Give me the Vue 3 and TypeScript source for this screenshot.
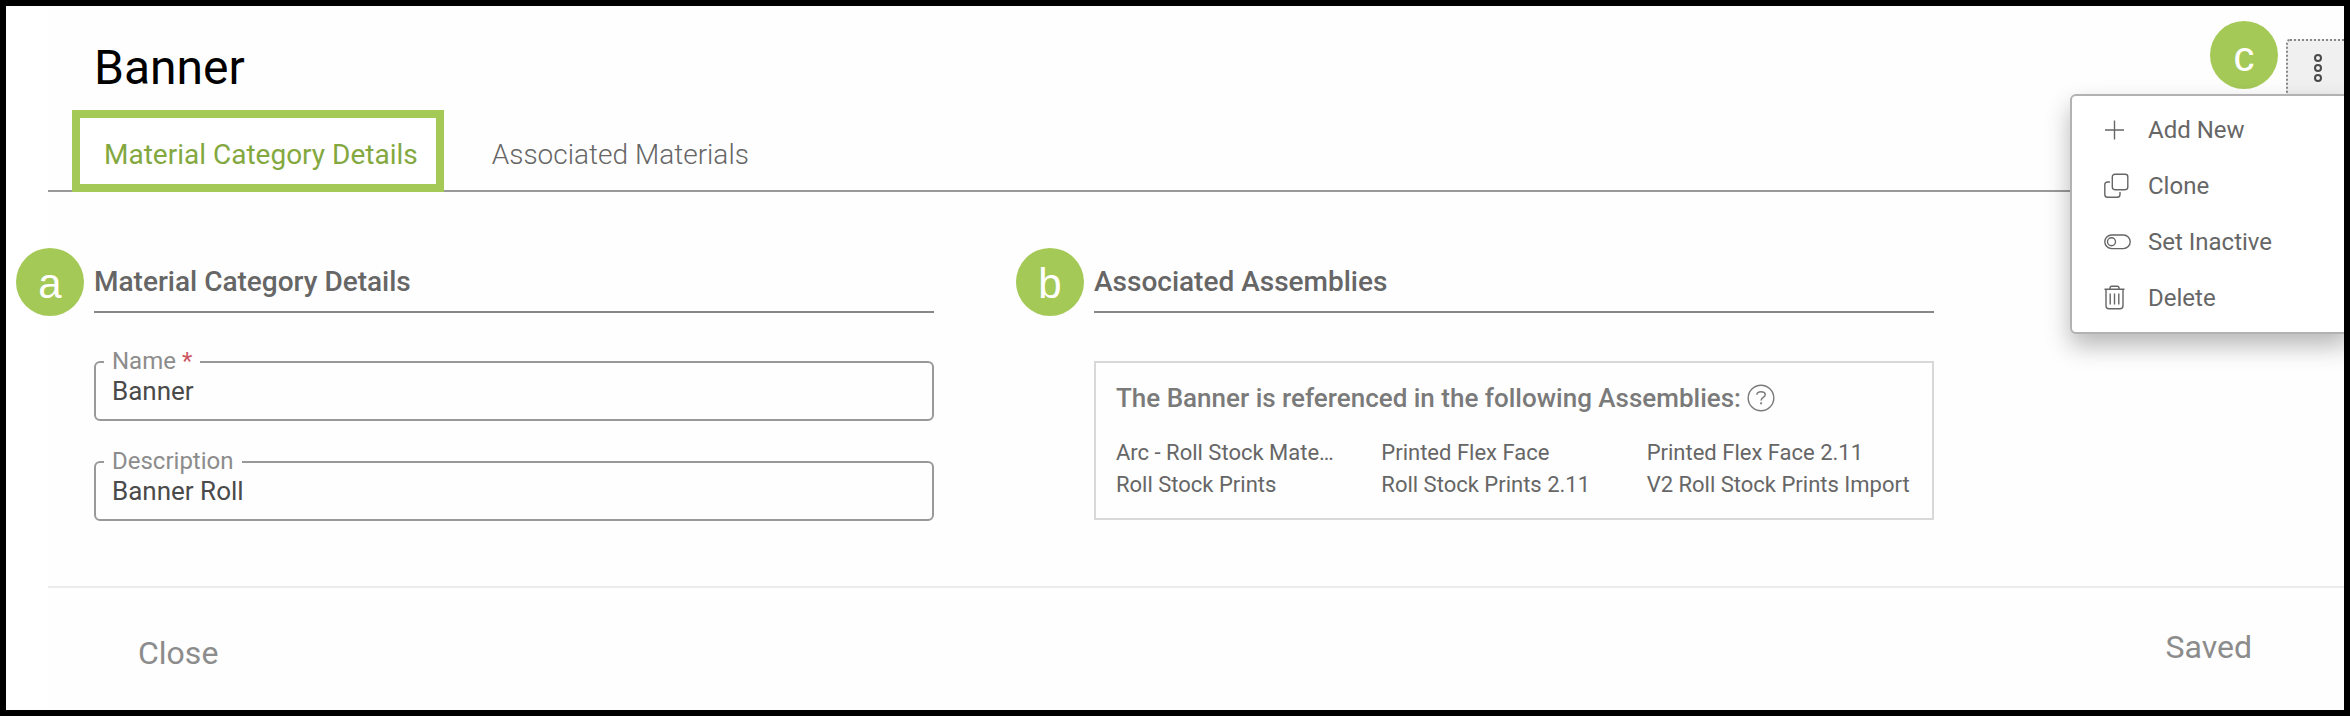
<script setup lang="ts">
import { ref } from 'vue'

const name = ref('Banner')
const description = ref('Banner Roll')

const assemblies: string[] = [
  'Arc - Roll Stock Mate…',
  'Printed Flex Face',
  'Printed Flex Face 2.11',
  'Roll Stock Prints',
  'Roll Stock Prints 2.11',
  'V2 Roll Stock Prints Import',
]

type Icon = 'add' | 'clone' | 'toggle' | 'trash'
const actions: { label: string; icon: Icon }[] = [
  { label: 'Add New', icon: 'add' },
  { label: 'Clone', icon: 'clone' },
  { label: 'Set Inactive', icon: 'toggle' },
  { label: 'Delete', icon: 'trash' },
]
</script>

<template>
  <div class="frame">
    <div class="panel">
      <header>
        <h1>Banner</h1>
        <nav class="tabs">
          <button type="button" class="tab active">Material Category Details</button>
          <button type="button" class="tab">Associated Materials</button>
        </nav>
      </header>

      <main>
        <section>
          <h2><span class="badge">a</span>Material Category Details</h2>
          <div class="fields">
            <div class="field">
              <label for="name">Name <span class="required">*</span></label>
              <input id="name" v-model="name" type="text" />
            </div>
            <div class="field">
              <label for="description">Description</label>
              <input id="description" v-model="description" type="text" />
            </div>
          </div>
        </section>

        <section>
          <h2><span class="badge">b</span>Associated Assemblies</h2>
          <div class="references">
            <h3>
              The Banner is referenced in the following Assemblies:
              <svg class="help" viewBox="0 0 28 28" fill="none" stroke="currentColor">
                <circle cx="14" cy="14" r="12.8" stroke-width="1.4" />
                <path d="M9.9 10.7C10 8.8 11.6 7.7 14 7.7c2.5 0 4.2 1.2 4.2 3 0 3-4.1 2.4-4.1 5.8" stroke-width="1.5" />
                <circle cx="14.1" cy="19.3" r="1.1" fill="currentColor" stroke="none" />
              </svg>
            </h3>
            <ul>
              <li v-for="item in assemblies" :key="item">{{ item }}</li>
            </ul>
          </div>
        </section>
      </main>

      <footer>
        <button type="button" class="close">Close</button>
        <button type="button" class="saved">Saved</button>
      </footer>
    </div>

    <span class="badge menu-badge">c</span>
    <button type="button" class="more" aria-label="More actions">
      <svg viewBox="0 0 8 28" fill="none" stroke="currentColor" stroke-width="2">
        <circle cx="4" cy="4" r="3" />
        <circle cx="4" cy="14" r="3" />
        <circle cx="4" cy="24" r="3" />
      </svg>
    </button>
    <div class="menu">
      <button v-for="action in actions" :key="action.label" type="button" class="action">
        <svg viewBox="0 0 28 28" fill="none" stroke="currentColor" stroke-width="1.4">
          <path v-if="action.icon === 'add'" d="M1 14h19M10.5 4.5v19" />
          <template v-else-if="action.icon === 'clone'">
            <rect x="8.3" y="2.2" width="15.5" height="15.5" rx="2.6" />
            <path d="M6 10H3.6Q0.8 10 0.8 12.8V22.4Q0.8 25.2 3.6 25.2H13.2Q16 25.2 16 22.4V20" />
          </template>
          <template v-else-if="action.icon === 'toggle'">
            <rect x="0.8" y="7" width="25.4" height="13.6" rx="6.8" />
            <circle cx="7.5" cy="13.8" r="4" />
          </template>
          <template v-else>
            <path d="M0.5 5.2H20.5M6 5V4Q6 2.2 7.8 2.2H13.2Q15 2.2 15 4V5M2 5.2V21.8Q2 24.8 5 24.8H16Q19 24.8 19 21.8V5.2" />
            <path d="M6.2 9.5V20.5M10.5 9.5V20.5M14.8 9.5V20.5" />
          </template>
        </svg>
        {{ action.label }}
      </button>
    </div>
  </div>
</template>

<style>
body {
  margin: 0;
}
</style>

<style scoped>
.frame {
  position: relative;
  display: flex;
  box-sizing: border-box;
  min-height: 100vh;
  overflow: hidden;
  padding-left: 42px;
  border: 6px solid #000;
  background: #fff;
  color: #666;
  font-family: Roboto, 'Liberation Sans', sans-serif;
}
button {
  margin: 0;
  padding: 0;
  border: 0;
  background: none;
  color: inherit;
  font: inherit;
  cursor: pointer;
}
h1,
h2,
h3,
ul {
  margin: 0;
  padding: 0;
}
.panel {
  display: flex;
  flex: 1;
  flex-direction: column;
  min-width: 0;
  background: #fefefe;
}
header {
  padding: 30px 0 0 24px;
  border-bottom: 2px solid #999;
}
h1 {
  padding-left: 22px;
  color: #000;
  font-size: 48px;
  font-weight: 400;
  line-height: 64px;
}
.tabs {
  display: flex;
  gap: 34px;
  margin: 10px 0 -2px;
}
.tab {
  box-sizing: border-box;
  height: 82px;
  padding: 6px 14px 0;
  color: #666;
  font-size: 28px;
  font-weight: 300;
}
.tab.active {
  padding: 6px 18px 0 24px;
  border: 8px solid #a4c957;
  background: #fff;
  color: #84a840;
  font-weight: 400;
}
main {
  display: grid;
  flex: 1;
  grid-template-columns: 84fr 84fr 9fr;
  column-gap: 160px;
  align-items: start;
  padding: 70px 160px 60px 46px;
}
h2 {
  position: relative;
  padding-bottom: 9px;
  border-bottom: 2px solid #888;
  font-size: 28px;
  font-weight: 500;
  line-height: 40px;
}
.badge {
  position: absolute;
  top: -14px;
  left: -78px;
  width: 68px;
  height: 68px;
  border-radius: 50%;
  background: #a4c957;
  color: #fff;
  font-family: 'Liberation Sans', sans-serif;
  font-size: 42px;
  font-weight: 400;
  line-height: 72px;
  text-align: center;
}
.menu-badge {
  top: 15px;
  right: 66px;
  left: auto;
}
.fields {
  display: grid;
  gap: 40px;
  margin-top: 48px;
}
.field {
  position: relative;
  border: 2px solid #999;
  border-radius: 6px;
}
.field label {
  position: absolute;
  top: -16px;
  left: 8px;
  padding: 0 8px;
  background: #fefefe;
  color: #8c8c8c;
  font-size: 24px;
  line-height: 28px;
}
.required {
  color: #cb5560;
}
.field input {
  display: block;
  box-sizing: border-box;
  width: 100%;
  height: 56px;
  padding: 0 16px;
  border: 0;
  outline: 0;
  background: none;
  color: #4a4a4a;
  font: 400 26px Roboto, 'Liberation Sans', sans-serif;
}
.references {
  margin-top: 48px;
  padding: 17px 20px;
  border: 2px solid #d8d8d8;
}
h3 {
  display: flex;
  align-items: center;
  gap: 6px;
  color: #7a7a7a;
  font-size: 26px;
  font-weight: 500;
  line-height: 36px;
}
.help {
  width: 28px;
  height: 28px;
}
ul {
  display: grid;
  grid-template-columns: repeat(3, 1fr);
  margin-top: 21px;
  font-size: 22px;
  line-height: 32px;
  list-style: none;
  white-space: nowrap;
}
footer {
  display: flex;
  align-items: start;
  justify-content: space-between;
  height: 82px;
  padding: 40px 92px 0 90px;
  border-top: 2px solid #ebebeb;
  color: #8c8c8c;
  font-size: 32px;
  line-height: 38px;
}
.close {
  margin-top: 6px;
}
.more {
  position: absolute;
  top: 33px;
  right: -6px;
  box-sizing: border-box;
  width: 64px;
  height: 58px;
  border: 2px dotted #888;
  border-radius: 4px;
  background: #f0f0f0;
  color: #4a4a4a;
}
.more svg {
  display: block;
  width: 8px;
  height: 28px;
  margin: 0 auto;
}
.menu {
  position: absolute;
  top: 88px;
  right: -6px;
  box-sizing: border-box;
  width: 280px;
  padding: 6px 0;
  border: 2px solid #b2b2b2;
  border-radius: 6px;
  background: #fff;
  box-shadow: 0 12px 24px rgba(0, 0, 0, 0.28);
}
.action {
  display: flex;
  align-items: center;
  gap: 16px;
  width: 100%;
  height: 56px;
  padding-left: 32px;
  font-size: 24px;
}
.action svg {
  width: 28px;
  height: 28px;
}
</style>
